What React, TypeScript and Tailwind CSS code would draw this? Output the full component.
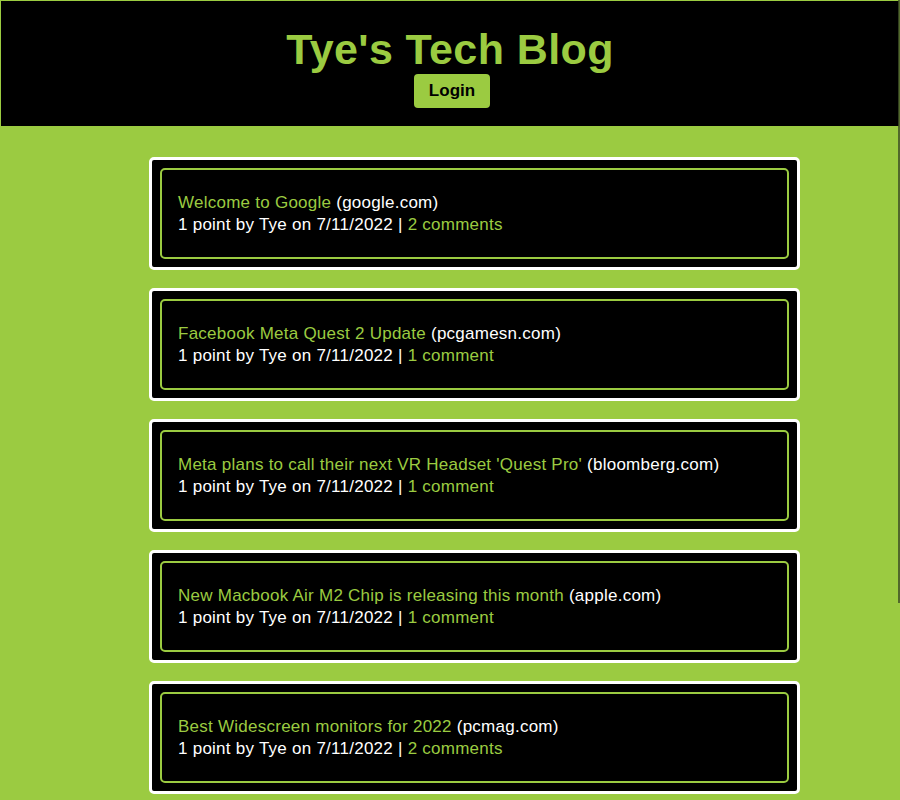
import React from 'react';

const posts = [
  { title: 'Welcome to Google', site: 'google.com', comments: '2 comments' },
  { title: 'Facebook Meta Quest 2 Update', site: 'pcgamesn.com', comments: '1 comment' },
  { title: "Meta plans to call their next VR Headset 'Quest Pro'", site: 'bloomberg.com', comments: '1 comment' },
  { title: 'New Macbook Air M2 Chip is releasing this month', site: 'apple.com', comments: '1 comment' },
  { title: 'Best Widescreen monitors for 2022', site: 'pcmag.com', comments: '2 comments' },
];

export default function App() {
  return (
    <div className="relative min-h-[800px] w-full bg-[#9bcb41] font-['Liberation_Sans',Arial,sans-serif]">
      {/* Header */}
      <header className="h-[127px] bg-black border border-[#9bcb41] flex flex-col items-center pt-[24px]">
        <h1 className="text-[43px] leading-[48px] font-bold text-[#9bcb41] tracking-[0.4px]">Tye's Tech Blog</h1>
        <button className="mt-[1px] ml-[4px] bg-[#9bcb41] text-black font-bold text-[17px] leading-[22px] px-[15px] py-[6px] rounded-[4px]">
          Login
        </button>
      </header>

      {/* Posts */}
      <main className="flex flex-col items-start gap-[18px] pl-[149px] pt-[30px] pb-6">
        {posts.map((post) => (
          <div key={post.title} className="w-[651px] bg-black border-[3px] border-white rounded-[5px] p-[8px]">
            <div className="border-2 border-[#9bcb41] rounded-[5px] px-[16px] pt-[22px] pb-[21px] text-[17px] leading-[22px] tracking-[0.25px] text-white">
              <div>
                <span className="text-[#9bcb41]">{post.title}</span> ({post.site})
              </div>
              <div>
                1 point by Tye on 7/11/2022 | <span className="text-[#9bcb41]">{post.comments}</span>
              </div>
            </div>
          </div>
        ))}
      </main>

      {/* scrollbar thumb */}
      <div className="absolute right-0 top-0 w-[2px] h-[603px] bg-[#3f4f25]/80" />
    </div>
  );
}
